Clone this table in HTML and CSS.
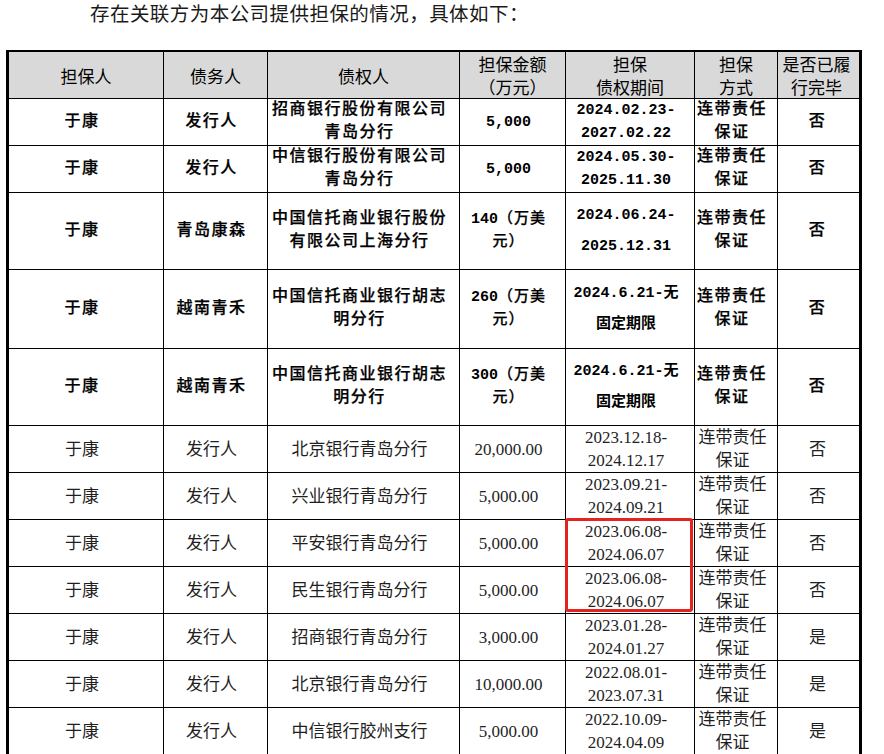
FILE: index.html
```html
<!DOCTYPE html>
<html lang="zh-CN">
<head>
<meta charset="utf-8">
<title>关联方担保情况</title>
<link rel="stylesheet" href="styles.css">
</head>
<body>
<p class="intro">存在关联方为本公司提供担保的情况，具体如下：</p>
<div class="sheet">
  <table class="grid">
    <colgroup>
      <col class="c1"><col class="c2"><col class="c3"><col class="c4"><col class="c5"><col class="c6"><col class="c7">
    </colgroup>
    <thead>
      <tr class="h47">
        <th>担保人</th><th>债务人</th><th>债权人</th><th>担保金额<br>（万元）</th><th>担保<br>债权期间</th><th>担保<br>方式</th><th>是否已履<br>行完毕</th>
      </tr>
    </thead>
    <tbody class="bold">
      <tr class="h46">
        <td class="cn">于康</td><td class="cn">发行人</td><td class="cn">招商银行股份有限公司<br>青岛分行</td><td class="num">5,000</td><td class="num">2024.02.23-<br>2027.02.22</td><td class="cn">连带责任<br>保证</td><td class="cn">否</td>
      </tr>
      <tr class="h47">
        <td class="cn">于康</td><td class="cn">发行人</td><td class="cn">中信银行股份有限公司<br>青岛分行</td><td class="num">5,000</td><td class="num">2024.05.30-<br>2025.11.30</td><td class="cn">连带责任<br>保证</td><td class="cn">否</td>
      </tr>
      <tr class="h78">
        <td class="cn">于康</td><td class="cn">青岛康森</td><td class="cn">中国信托商业银行股份<br>有限公司上海分行</td><td class="num">140<span class="cn">（万美<br>元）</span></td><td class="num tall">2024.06.24-<br>2025.12.31</td><td class="cn">连带责任<br>保证</td><td class="cn">否</td>
      </tr>
      <tr class="h80">
        <td class="cn">于康</td><td class="cn">越南青禾</td><td class="cn">中国信托商业银行胡志<br>明分行</td><td class="num">260<span class="cn">（万美<br>元）</span></td><td class="num tall">2024.6.21-无<br>固定期限</td><td class="cn">连带责任<br>保证</td><td class="cn">否</td>
      </tr>
      <tr class="h78">
        <td class="cn">于康</td><td class="cn">越南青禾</td><td class="cn">中国信托商业银行胡志<br>明分行</td><td class="num">300<span class="cn">（万美<br>元）</span></td><td class="num tall">2024.6.21-无<br>固定期限</td><td class="cn">连带责任<br>保证</td><td class="cn">否</td>
      </tr>
    </tbody>
    <tbody class="plain">
      <tr class="h46">
        <td>于康</td><td>发行人</td><td>北京银行青岛分行</td><td>20,000.00</td><td>2023.12.18-<br>2024.12.17</td><td class="mode">连带责任<br>保证</td><td>否</td>
      </tr>
      <tr class="h47">
        <td>于康</td><td>发行人</td><td>兴业银行青岛分行</td><td>5,000.00</td><td>2023.09.21-<br>2024.09.21</td><td class="mode">连带责任<br>保证</td><td>否</td>
      </tr>
      <tr class="h46">
        <td>于康</td><td>发行人</td><td>平安银行青岛分行</td><td>5,000.00</td><td>2023.06.08-<br>2024.06.07</td><td class="mode">连带责任<br>保证</td><td>否</td>
      </tr>
      <tr class="h46">
        <td>于康</td><td>发行人</td><td>民生银行青岛分行</td><td>5,000.00</td><td>2023.06.08-<br>2024.06.07</td><td class="mode">连带责任<br>保证</td><td>否</td>
      </tr>
      <tr class="h47">
        <td>于康</td><td>发行人</td><td>招商银行青岛分行</td><td>3,000.00</td><td>2023.01.28-<br>2024.01.27</td><td class="mode">连带责任<br>保证</td><td>是</td>
      </tr>
      <tr class="h46">
        <td>于康</td><td>发行人</td><td>北京银行青岛分行</td><td>10,000.00</td><td>2022.08.01-<br>2023.07.31</td><td class="mode">连带责任<br>保证</td><td>是</td>
      </tr>
      <tr class="h45">
        <td>于康</td><td>发行人</td><td>中信银行胶州支行</td><td>5,000.00</td><td>2022.10.09-<br>2024.04.09</td><td class="mode">连带责任<br>保证</td><td>是</td>
      </tr>
      <tr class="h46">
        <td></td><td></td><td></td><td></td><td></td><td class="mode"></td><td></td>
      </tr>
    </tbody>
  </table>
  <div class="mark"></div>
</div>
</body>
</html>
```

FILE: styles.css
```css
* {
  box-sizing: border-box;
}

html,
body {
  margin: 0;
  padding: 0;
  background: #ffffff;
}

body {
  width: 884px;
  height: 754px;
  overflow: hidden;
  font-family: "Noto Sans CJK SC", sans-serif;
  color: #000000;
}

.intro {
  margin: 0;
  height: 50px;
  padding: 1px 0 0 90px;
  font-family: "Noto Sans CJK SC", serif;
  font-size: 19.5px;
  line-height: 24px;
  letter-spacing: 0.45px;
  color: #1a1a1a;
}

.sheet {
  position: relative;
  width: 856px;
  margin-left: 6px;
}

.grid {
  table-layout: fixed;
  width: 856px;
  border-collapse: separate;
  border-spacing: 0;
  border-left: 3px solid #000;
  border-right: 3px solid #000;
  border-top: 2px solid #000;
}

.c1 { width: 155px; }
.c2 { width: 104px; }
.c3 { width: 192px; }
.c4 { width: 106px; }
.c5 { width: 129px; }
.c6 { width: 83px; }
.c7 { width: 81px; }

.grid th,
.grid td {
  padding: 0 8px 0 0;
  border-right: 1px solid #000;
  border-bottom: 1px solid #000;
  text-align: center;
  vertical-align: middle;
  white-space: nowrap;
}

.grid th:last-child,
.grid td:last-child {
  border-right: none;
  padding-right: 2px;
}

.grid th {
  padding: 0;
  background: #d9d9d9;
  font-family: "Noto Sans CJK SC", sans-serif;
  font-weight: 400;
  font-size: 17px;
  line-height: 23px;
  color: #000;
}

.grid th:last-child {
  padding: 0 4px 0 0;
}

.h45 td { height: 44px; }
.h46 td { height: 45px; }
.h47 td,
.h47 th { height: 46px; }
.h78 td { height: 77px; }
.h80 td { height: 79px; }

.bold td {
  font-family: "Liberation Mono", "Noto Sans CJK SC", monospace;
  font-weight: 700;
  color: #000;
  line-height: 23px;
}

.bold .cn {
  font-size: 16px;
  font-weight: 500;
  letter-spacing: 1.5px;
  -webkit-text-stroke: 0.25px #000;
}

.bold .num {
  font-size: 15px;
  letter-spacing: 0;
}

.bold .num .cn {
  font-size: 15px;
  letter-spacing: 1px;
}

.bold .tall {
  line-height: 31px;
}

.plain td {
  font-family: "Liberation Serif", "Noto Sans CJK SC", serif;
  font-size: 17px;
  line-height: 23px;
  color: #1f1f1f;
}

.plain td.mode {
  padding: 0 8px 0 1px;
}

.mark {
  position: absolute;
  left: 559px;
  top: 468px;
  width: 128px;
  height: 94px;
  border: 3px solid #e5221e;
  border-radius: 3px;
}
```
